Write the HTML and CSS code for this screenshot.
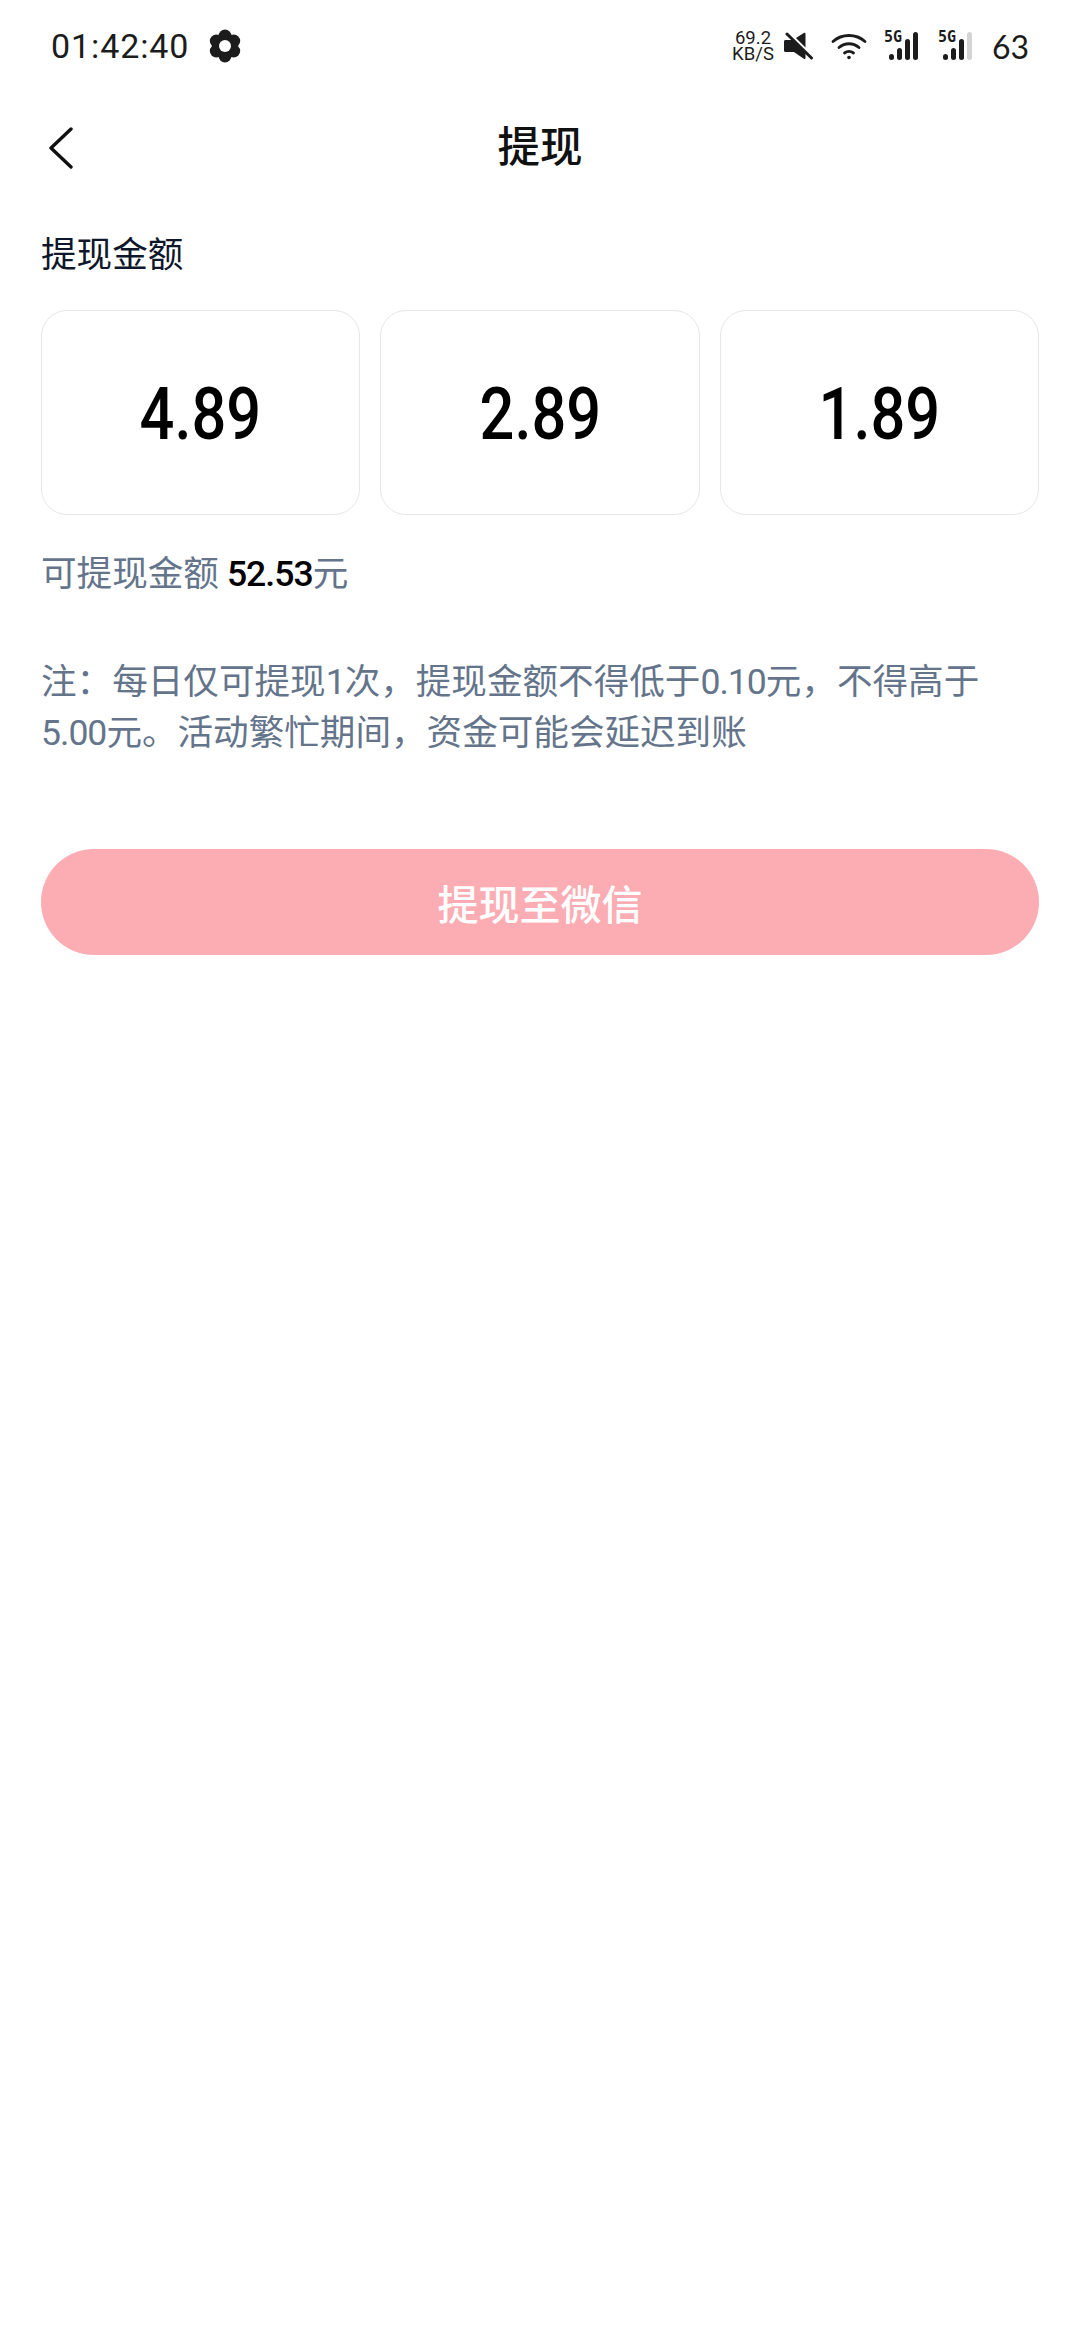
FILE: index.html
```html
<!DOCTYPE html>
<html lang="zh-CN">
<head>
    <meta charset="UTF-8">
    <meta name="viewport" content="width=device-width, initial-scale=1.0">
    <title>提现</title>
    <link rel="stylesheet" href="styles.css">
</head>
<body>
    <div class="status-bar">
        <div class="status-left">
            <span class="clock">01:42:40</span>
            <svg class="gear" viewBox="0 0 34 34">
                <g fill="#1c1c1c">
                    <circle cx="17" cy="7" r="6.500"/>
                    <circle cx="25.700" cy="12" r="6.500"/>
                    <circle cx="25.700" cy="22" r="6.500"/>
                    <circle cx="17" cy="27" r="6.500"/>
                    <circle cx="8.300" cy="22" r="6.500"/>
                    <circle cx="8.300" cy="12" r="6.500"/>
                    <circle cx="17" cy="17" r="9"/>
                </g>
                <circle cx="17" cy="17" r="6" fill="#fff"/>
            </svg>
        </div>
        <div class="status-right">
            <div class="net-speed"><span>69.2</span><span>KB/S</span></div>
            <svg class="ico-mute" viewBox="0 0 30 28"><path fill="#1c1c1c" d="M1.500 8H8L21.500 21.500V26c0 1-.8 1.400-1.700.8L10 20H1.500C.6 20 0 19.400 0 18.500v-9C0 8.600.6 8 1.500 8zM12 6l7.800-5C20.700.5 21.500.9 21.500 2v13.500z"/><path stroke="#1c1c1c" stroke-width="3" stroke-linecap="round" d="M3 2l24.500 24"/></svg>
            <svg class="ico-wifi" viewBox="0 0 36 28" fill="none" stroke="#1c1c1c" stroke-width="2.800" stroke-linecap="round"><path d="M2 9.500C11 1.500 25 1.500 34 9.500"/><path d="M8 15.500c6-5 14-5 20 0"/><path d="M13.500 21c3-2.200 6-2.200 9 0"/><circle cx="18" cy="25.500" r="1.800" fill="#1c1c1c" stroke="none"/></svg>
            <div class="signal">
                <span class="signal-tag">5G</span>
                <div class="bars"><i class="b1"></i><i class="b2"></i><i class="b3"></i><i class="b4"></i></div>
            </div>
            <div class="signal">
                <span class="signal-tag">5G</span>
                <div class="bars"><i class="b1"></i><i class="b2"></i><i class="b3"></i><i class="b4 off"></i></div>
            </div>
            <span class="battery">63</span>
        </div>
    </div>

    <div class="nav">
        <svg class="back" viewBox="0 0 26 42" fill="none" stroke="#111" stroke-width="3.400" stroke-linecap="round" stroke-linejoin="round"><path d="M23 2L3 21l20 19"/></svg>
        <h1>提现</h1>
    </div>

    <div class="content">
        <div class="label">提现金额</div>
        <div class="amounts">
            <div class="amount"><span>4.89</span></div>
            <div class="amount"><span>2.89</span></div>
            <div class="amount"><span>1.89</span></div>
        </div>
        <div class="balance">可提现金额 <b>52.53</b>元</div>
        <p class="note">注：每日仅可提现<span class="num">1</span>次，提现金额不得低于<span class="num">0.10</span>元，不得高于<br><span class="num">5.00</span>元。活动繁忙期间，资金可能会延迟到账</p>
        <button class="submit" type="button">提现至微信</button>
    </div>
</body>
</html>
```

FILE: styles.css
```css
body {
    font-family: "Noto Sans CJK SC", Roboto, sans-serif;
    background-color: #fff;
    color: #111;
    margin: 0;
    padding: 0;
}

.status-bar {
    height: 92px;
    display: flex;
    justify-content: space-between;
    align-items: center;
    padding: 0 51px 0 51px;
}

.status-left,
.status-right {
    display: flex;
    align-items: center;
}

.clock {
    font-family: Roboto, sans-serif;
    font-size: 34px;
    letter-spacing: 0.9px;
    color: #1c1c1c;
}

.gear {
    width: 34px;
    height: 34px;
    margin-left: 19px;
}

.net-speed {
    display: flex;
    flex-direction: column;
    align-items: center;
    font-family: Roboto, sans-serif;
    font-size: 18.5px;
    line-height: 16px;
    color: #1c1c1c;
}

.ico-mute {
    width: 30px;
    height: 28px;
    margin-left: 10px;
}

.ico-wifi {
    width: 36px;
    height: 28px;
    margin-left: 17px;
}

.signal {
    position: relative;
    width: 34px;
    height: 28px;
    margin-left: 17px;
}

.signal + .signal {
    margin-left: 20px;
}

.signal-tag {
    position: absolute;
    left: 0;
    top: -3px;
    font-family: "DejaVu Sans Mono", monospace;
    font-size: 15px;
    line-height: 16px;
    font-weight: bold;
    color: #1c1c1c;
}

.bars {
    height: 100%;
    display: flex;
    justify-content: flex-end;
    align-items: flex-end;
    gap: 3px;
}

.bars i {
    width: 5px;
    border-radius: 3px;
    background-color: #1c1c1c;
}

.bars .b1 { height: 6px; }
.bars .b2 { height: 12px; }
.bars .b3 { height: 21px; }
.bars .b4 { height: 28px; }
.bars .off { background-color: #d4d4d4; }

.battery {
    font-family: Lato, sans-serif;
    font-size: 32px;
    margin-left: 20px;
    color: #1c1c1c;
}

.nav {
    position: relative;
    height: 108px;
    display: flex;
    justify-content: center;
    align-items: center;
}

.back {
    position: absolute;
    left: 48px;
    top: 35px;
    width: 26px;
    height: 42px;
}

.nav h1 {
    margin: 0 0 6px;
    font-size: 42.5px;
    font-weight: 500;
    color: #111;
}

.content {
    padding: 0 41px;
}

.label {
    margin-top: 26px;
    font-size: 35.6px;
    line-height: 52px;
    color: #0f172a;
}

.amounts {
    display: flex;
    gap: 20px;
    margin-top: 32px;
}

.amount {
    flex: 1;
    height: 205px;
    box-sizing: border-box;
    display: flex;
    justify-content: center;
    align-items: center;
    padding-top: 3px;
    border: 1.5px solid #e5e7eb;
    border-radius: 26px;
}

.amount span {
    font-family: Roboto, sans-serif;
    font-size: 73px;
    font-weight: 500;
    transform: scaleX(0.84);
    color: #000;
}

.balance {
    margin-top: 31px;
    font-size: 35.6px;
    line-height: 50px;
    color: #64748b;
}

.balance b {
    font-family: Roboto, sans-serif;
    font-weight: 500;
    line-height: 1;
    letter-spacing: -1px;
    color: #000;
}

.note {
    margin: 57px 0 0;
    font-size: 35.6px;
    line-height: 51px;
    color: #64748b;
}

.num {
    font-family: Roboto, sans-serif;
    line-height: 1;
    letter-spacing: -1px;
}

.submit {
    display: block;
    width: 100%;
    height: 106px;
    margin-top: 94px;
    border: none;
    border-radius: 53px;
    background-color: #fcadb3;
    color: #fff;
    font-family: inherit;
    font-size: 41px;
    font-weight: 500;
}
```
